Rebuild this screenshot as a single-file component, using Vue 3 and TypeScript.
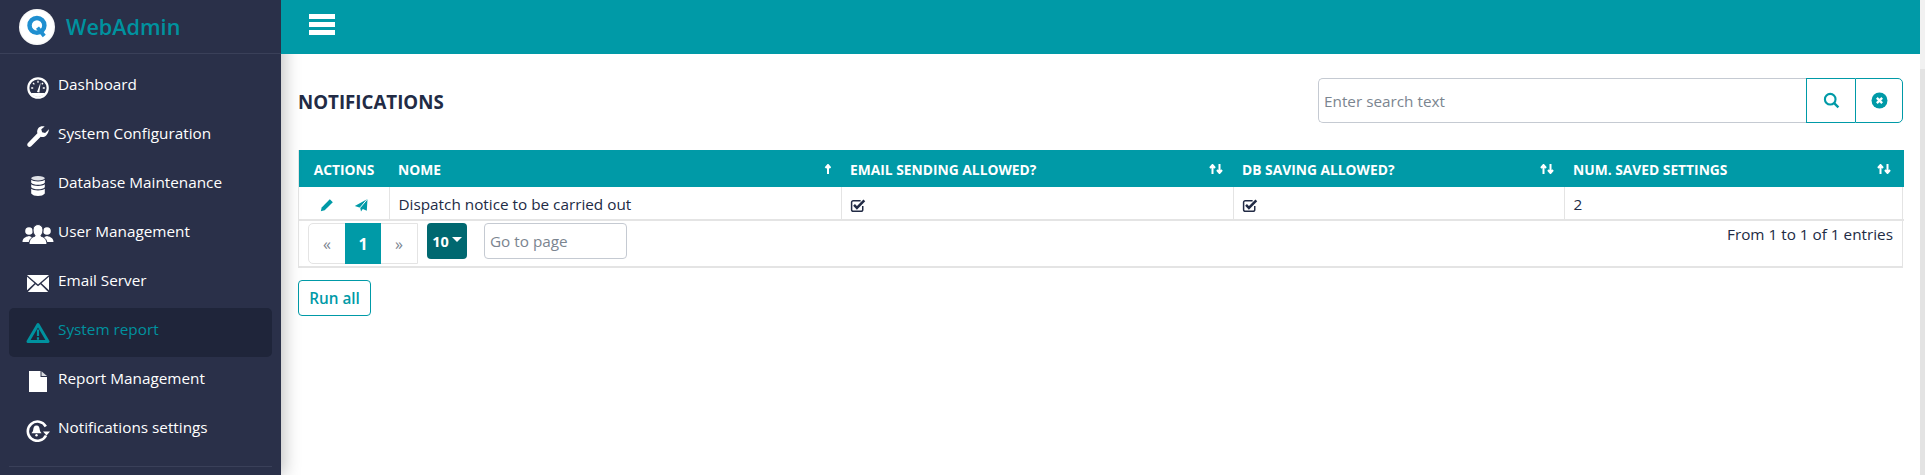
<script setup lang="ts">
interface NavItem { label: string; icon: string; active?: boolean }
const nav: NavItem[] = [
  { label: 'Dashboard', icon: 'gauge' },
  { label: 'System Configuration', icon: 'wrench' },
  { label: 'Database Maintenance', icon: 'db' },
  { label: 'User Management', icon: 'users' },
  { label: 'Email Server', icon: 'mail' },
  { label: 'System report', icon: 'warn', active: true },
  { label: 'Report Management', icon: 'file' },
  { label: 'Notifications settings', icon: 'bell' },
]
interface Col { label: string; width: number; sort: 'up' | 'both' | 'none' }
const cols: Col[] = [
  { label: 'Actions', width: 90, sort: 'none' },
  { label: 'Nome', width: 452, sort: 'up' },
  { label: 'Email sending allowed?', width: 392, sort: 'both' },
  { label: 'DB saving allowed?', width: 331, sort: 'both' },
  { label: 'Num. saved settings', width: 340, sort: 'both' },
]
</script>

<template>
  <div class="page">
    <aside class="sidebar">
      <div class="brand">
        <div class="logo">
          <svg viewBox="0 0 24 24" width="27" height="27">
            <circle cx="11.500" cy="11" r="6.600" fill="none" stroke="#1f8fd0" stroke-width="4" />
            <path d="M12 13l6 7.500" stroke="#1f8fd0" stroke-width="3.400" fill="none" />
          </svg>
        </div>
        <span class="brand-name">WebAdmin</span>
      </div>
      <nav class="nav">
        <a v-for="item in nav" :key="item.label" class="nav-item" :class="{ active: item.active }">
          <span class="nav-icon">
            <svg v-if="item.icon === 'gauge'" viewBox="0 0 22 22" width="22" height="22">
              <circle cx="11" cy="11" r="9.700" fill="none" stroke="currentColor" stroke-width="2.200" />
              <path d="M3.800 16a8.600 8.600 0 0 0 14.400 0z" fill="currentColor" />
              <path d="M10 15l3.600-9.500-1.200 10z" fill="currentColor" />
              <path d="M4.200 11h2M6 6l1.400 1.400M11 3.800v2M17.800 11h-2M16 6l-1.200 1.200" stroke="currentColor" stroke-width="1.300" />
            </svg>
            <svg v-else-if="item.icon === 'wrench'" viewBox="0 0 22 22" width="22" height="22">
              <path d="M21.500 3.800l-3.400 3.100-3-.7-.8-2.900L17.700.6c-2.500-.8-4.800-.2-6.300 1.500-1.200 1.400-1.600 3.400-1 5.200L1 16.900c-1 1-1 2.500-.1 3.400.9.900 2.300.9 3.300-.1l9.500-9.500c1.900.6 4 .1 5.500-1.300 1.700-1.500 2.600-3.800 2.800-6.600z" fill="currentColor" />
            </svg>
            <svg v-else-if="item.icon === 'db'" viewBox="0 0 14 20" width="14" height="20">
              <ellipse cx="7" cy="2.200" rx="6.800" ry="2.200" fill="#dfe1e6" />
              <path d="M.2 3.800C1.500 5 3.800 5.400 7 5.400s5.500-.4 6.800-1.600v3C12.500 8.300 10 8.800 7 8.800S1.500 8.300.2 6.800z" fill="currentColor" />
              <path d="M.2 8.300C1.500 9.500 3.800 10 7 10s5.500-.5 6.800-1.700v3c-1.300 1.500-3.800 2-6.800 2s-5.500-.5-6.800-2z" fill="currentColor" />
              <path d="M.2 12.800C1.500 14 3.800 14.500 7 14.500s5.500-.5 6.800-1.700v4.700c-1.300 1.700-3.800 2.500-6.800 2.500s-5.500-.8-6.800-2.500z" fill="currentColor" />
            </svg>
            <svg v-else-if="item.icon === 'users'" viewBox="0 0 32 21" width="32" height="21">
              <circle cx="7" cy="7" r="3.800" fill="currentColor" />
              <circle cx="25" cy="7" r="3.800" fill="currentColor" />
              <path d="M.5 18c0-3.500 2.500-5 6.500-6 4 1 5.500 3 5.500 6zM19.500 18c0-3 1.500-5 5.500-6 4 1 6.500 2.500 6.500 6z" fill="currentColor" />
              <path d="M11 6c0-3.200 2.200-5.500 5-5.500s5 2.300 5 5.500-1.500 5-2.200 6c3.200 1 6.200 3 6.200 8.500H7c0-5.500 3-7.500 6.200-8.500-.7-1-2.200-2.800-2.200-6z" fill="currentColor" stroke="#2a3049" stroke-width="1" />
            </svg>
            <svg v-else-if="item.icon === 'mail'" viewBox="0 0 22 17" width="22" height="17">
              <path d="M0 0h22L11 9.500z" fill="currentColor" />
              <path d="M0 1.800v13.400l7.500-7zM22 1.800v13.400l-7.500-7z" fill="currentColor" />
              <path d="M.8 17L8.500 9.300l2.500 2 2.500-2L21.200 17z" fill="currentColor" />
            </svg>
            <svg v-else-if="item.icon === 'warn'" viewBox="0 0 24 21" width="24" height="21">
              <path d="M12 2.500l10 17H2z" fill="none" stroke="currentColor" stroke-width="3" stroke-linejoin="round" />
              <path d="M12 7.500v6.500M12 15.200v2.500" stroke="currentColor" stroke-width="2.200" fill="none" />
            </svg>
            <svg v-else-if="item.icon === 'file'" viewBox="0 0 18 21" width="18" height="21">
              <path d="M0 0h11.500v6H18v15H0z" fill="currentColor" />
              <path d="M12.500 0.300L18 5h-5.500z" fill="#d9dbe0" />
            </svg>
            <svg v-else viewBox="0 0 24 22" width="24" height="22">
              <path d="M19.800 6.500A9.600 9.600 0 1 0 20 15.500" fill="none" stroke="currentColor" stroke-width="2.600" />
              <path d="M17 11.500h7l-3.500 4z" fill="currentColor" />
              <path d="M10.500 5.500c2.500 0 3 2 3.300 4.500.2 1.500 1.200 2.500 1.700 3.200h-10c.5-.7 1.500-1.700 1.700-3.200.3-2.500.8-4.500 3.300-4.500z" fill="currentColor" />
              <circle cx="10.500" cy="15.300" r="1.200" fill="currentColor" />
            </svg>
          </span>
          <span class="nav-label">{{ item.label }}</span>
        </a>
      </nav>
      <div class="side-rule"></div>
    </aside>

    <div class="main">
      <header class="topbar">
        <button class="burger" aria-label="Menu"><span></span><span></span><span></span></button>
      </header>
      <section class="content">
        <div class="title-row">
          <h1 class="title">Notifications</h1>
          <div class="search">
            <input class="search-input" placeholder="Enter search text" />
            <button class="search-btn" aria-label="Search">
              <svg viewBox="0 0 16 16" width="17" height="17">
                <circle cx="6.800" cy="6.800" r="5" fill="none" stroke="currentColor" stroke-width="2" />
                <path d="M10.500 10.500l4 4" stroke="currentColor" stroke-width="2.200" />
              </svg>
            </button>
            <button class="search-btn last" aria-label="Clear">
              <svg viewBox="0 0 16 16" width="17" height="17">
                <circle cx="8" cy="8" r="7.500" fill="currentColor" />
                <path d="M5.500 5.500l5 5M10.500 5.500l-5 5" stroke="#fff" stroke-width="2.200" />
              </svg>
            </button>
          </div>
        </div>

        <div class="grid-wrap">
          <table class="grid">
            <colgroup>
              <col v-for="c in cols" :key="c.label" :style="{ width: c.width + 'px' }" />
            </colgroup>
            <thead>
              <tr>
                <th v-for="(c, i) in cols" :key="c.label" :class="{ center: i === 0 }">
                  <div class="th-in">
                    <span>{{ c.label }}</span>
                    <svg v-if="c.sort !== 'none'" class="sort" viewBox="0 0 14 10" width="14" height="10">
                      <path v-if="c.sort === 'both'" d="M3.500 10V2.500M1 4l2.500-3L6 4" fill="none" stroke="currentColor" stroke-width="2" />
                      <path v-if="c.sort === 'both'" d="M10.500 0v7.500M8 6l2.500 3L13 6" fill="none" stroke="currentColor" stroke-width="2" />
                      <path v-if="c.sort === 'up'" d="M11 10V2.500M8.500 4L11 1l2.500 3" fill="none" stroke="currentColor" stroke-width="2" />
                    </svg>
                  </div>
                </th>
              </tr>
            </thead>
            <tbody>
              <tr>
                <td class="actions">
                  <svg viewBox="0 0 14 14" width="14" height="14">
                    <path d="M.8 13.200l.9-3.800L9.800 1.300l3 3-8.100 8z" fill="#009aa7" />
                  </svg>
                  <svg viewBox="0 0 14 14" width="14" height="14">
                    <path d="M13.500 1L12.800 12.800 8.800 11 7 13.500l-.8-3.700L.8 8z" fill="#009aa7" />
                    <path d="M13.500 1L6 9.800" stroke="#fff" stroke-width="1" />
                  </svg>
                </td>
                <td>Dispatch notice to be carried out</td>
                <td class="check">
                  <svg viewBox="0 0 16 14" width="17" height="15">
                    <path d="M12 7.500v3.500a1.500 1.500 0 0 1-1.500 1.500H3A1.500 1.500 0 0 1 1.500 11V4A1.500 1.500 0 0 1 3 2.500h7" fill="none" stroke="#222b45" stroke-width="1.400" />
                    <path d="M3.800 6.500l2.700 2.700 7-7" fill="none" stroke="#222b45" stroke-width="2.400" />
                  </svg>
                </td>
                <td class="check">
                  <svg viewBox="0 0 16 14" width="17" height="15">
                    <path d="M12 7.500v3.500a1.500 1.500 0 0 1-1.500 1.500H3A1.500 1.500 0 0 1 1.500 11V4A1.500 1.500 0 0 1 3 2.500h7" fill="none" stroke="#222b45" stroke-width="1.400" />
                    <path d="M3.800 6.500l2.700 2.700 7-7" fill="none" stroke="#222b45" stroke-width="2.400" />
                  </svg>
                </td>
                <td>2</td>
              </tr>
            </tbody>
          </table>
          <div class="grid-foot">
            <div class="pager">
              <span class="pg">«</span>
              <span class="pg on">1</span>
              <span class="pg">»</span>
            </div>
            <button class="size">10<i class="caret"></i></button>
            <input class="goto" placeholder="Go to page" />
            <span class="count">From 1 to 1 of 1 entries</span>
          </div>
        </div>

        <button class="run">Run all</button>
      </section>
    </div>
    <div class="scroll"><div class="scroll-thumb"></div></div>
  </div>
</template>

<style>
html, body { margin: 0; height: 100%; overflow: hidden; background: #fff; }
</style>

<style scoped>
.page {
  display: flex;
  width: 100vw;
  height: 100vh;
  overflow: hidden;
  font-family: "Open Sans", "Liberation Sans", sans-serif;
  font-size: 15.300px;
  color: #222b45;
}
.sidebar {
  position: relative;
  z-index: 2;
  flex: 0 0 281px;
  background: #2a3049;
  box-shadow: 3px 0 16px rgba(0, 0, 0, .25);
}
.brand {
  display: flex;
  align-items: center;
  height: 53px;
  padding-left: 19px;
  border-bottom: 1px solid #3a4059;
}
.logo {
  width: 36px;
  height: 36px;
  border-radius: 50%;
  background: radial-gradient(circle at 50% 50%, #fff 62%, #d0d0d0 100%);
  display: flex;
  align-items: center;
  justify-content: center;
}
.brand-name {
  margin-left: 11px;
  color: #00929f;
  font-size: 21.600px;
  font-weight: 600;
}
.nav {
  display: flex;
  flex-direction: column;
  padding: 9px 9px 0;
}
.nav-item {
  display: flex;
  align-items: center;
  height: 49px;
  border-radius: 5px;
  color: #fff;
  padding-left: 10px;
}
.nav-item.active {
  background: #1f253a;
  color: #00929f;
}
.nav-icon {
  flex: 0 0 38px;
  display: flex;
  align-items: center;
  justify-content: center;
}
.nav-label {
  margin-left: 1px;
  margin-bottom: 8px;
}
.side-rule {
  margin: 11px 9px 0;
  height: 1px;
  background: #3a4059;
}
.main {
  flex: 1;
  min-width: 0;
  display: flex;
  flex-direction: column;
}
.topbar {
  position: relative;
  z-index: 3;
  height: 54px;
  flex: none;
  background: #009aa7;
  display: flex;
  align-items: flex-start;
  padding: 14px 0 0 28px;
  box-sizing: border-box;
}
.burger {
  width: 26px;
  padding: 0;
  border: 0;
  background: none;
  display: flex;
  flex-direction: column;
  gap: 3px;
}
.burger span {
  display: block;
  height: 5px;
  background: #fff;
}
.content {
  padding: 24px 17px 0;
}
.title-row {
  display: flex;
  align-items: center;
  justify-content: space-between;
  height: 45px;
}
.title {
  margin: 1px 0 0;
  font-size: 18.700px;
  font-weight: 700;
  text-transform: uppercase;
  color: #222b45;
}
.search {
  display: flex;
  width: 585px;
  height: 45px;
  box-sizing: border-box;
}
.search-input {
  flex: 1;
  min-width: 0;
  box-sizing: border-box;
  border: 1px solid #c5cad2;
  border-right: 0;
  border-radius: 5px 0 0 5px;
  padding: 1px 5px 0;
  font: inherit;
  outline: none;
}
.search-input::placeholder, .goto::placeholder {
  color: #7b8590;
  opacity: 1;
}
.search-btn {
  width: 49px;
  box-sizing: border-box;
  border: 1px solid #009aa7;
  border-right: 0;
  background: #fff;
  color: #009aa7;
  padding: 0;
  display: flex;
  align-items: center;
  justify-content: center;
}
.search-btn.last {
  width: 48px;
  border-right: 1px solid #009aa7;
  border-radius: 0 5px 5px 0;
}
.grid-wrap {
  margin-top: 27px;
  border-right: 1px solid #e4e4e4;
  border-left: 1px solid #e4e4e4;
  border-bottom: 2px solid #e4e4e4;
}
.grid {
  width: 100%;
  table-layout: fixed;
  border-collapse: collapse;
  color: #222b45;
}
.grid th {
  height: 37px;
  padding: 0 9px;
  background: #009aa7;
  color: #fff;
  font-size: 13.800px;
  font-weight: 700;
  text-transform: uppercase;
  text-align: left;
}
.th-in {
  display: flex;
  align-items: center;
  justify-content: space-between;
  padding-top: 1px;
}
.grid th.center .th-in { justify-content: center; }
.sort { flex: none; margin-right: 1px; }
.grid th:last-child .sort { margin-right: 4px; }
.grid td {
  height: 33px;
  padding: 2px 9px 0;
  box-sizing: border-box;
  border-right: 1px solid #e4e4e4;
  border-bottom: 2px solid #e4e4e4;
}
.grid td:last-child { border-right: 0; }
.grid td.actions { padding: 0; text-align: center; }
.grid td.actions svg { margin: 0 10px; vertical-align: middle; }
.grid td.check svg { display: block; margin: 3px 0 0 -1px; }
.grid-foot {
  display: flex;
  align-items: flex-start;
  height: 43px;
  padding: 2px 9px 0;
  gap: 0;
}
.pager {
  display: flex;
  height: 41px;
  box-sizing: border-box;
  border: 1px solid #e4e4e4;
  border-radius: 5px 0 0 5px;
}
.pg {
  width: 36px;
  display: flex;
  align-items: center;
  justify-content: center;
  color: #7b8590;
  font-size: 16px;
}
.pg.on {
  background: #009aa7;
  color: #fff;
  font-weight: 700;
  margin: -1px 0;
}
.size {
  margin-left: 9px;
  width: 40px;
  height: 36px;
  padding: 0;
  border: 0;
  border-radius: 4px;
  background: #006870;
  color: #fff;
  font: 700 14.500px "Open Sans", sans-serif;
  display: flex;
  align-items: center;
  justify-content: center;
  gap: 3px;
}
.caret {
  width: 0;
  height: 0;
  border-left: 5px solid transparent;
  border-right: 5px solid transparent;
  border-top: 5px solid #fff;
  margin-top: -3px;
}
.goto {
  margin-left: 17px;
  width: 143px;
  height: 36px;
  box-sizing: border-box;
  border: 1px solid #c5cad2;
  border-radius: 4px;
  padding: 0 5px;
  font: inherit;
  outline: none;
}
.count {
  margin-left: auto;
  margin-top: 1px;
}
.run {
  display: block;
  margin-top: 12px;
  width: 73px;
  height: 36px;
  padding: 0;
  background: #fff;
  border: 1px solid #009aa7;
  border-radius: 4px;
  color: #009aa7;
  font: 600 15.300px "Open Sans", sans-serif;
}
.scroll {
  flex: 0 0 5px;
  background: #f1f1f1;
  padding-top: 69px;
  box-sizing: border-box;
}
.scroll-thumb {
  height: 100%;
  background: #e3e3e3;
}
</style>
